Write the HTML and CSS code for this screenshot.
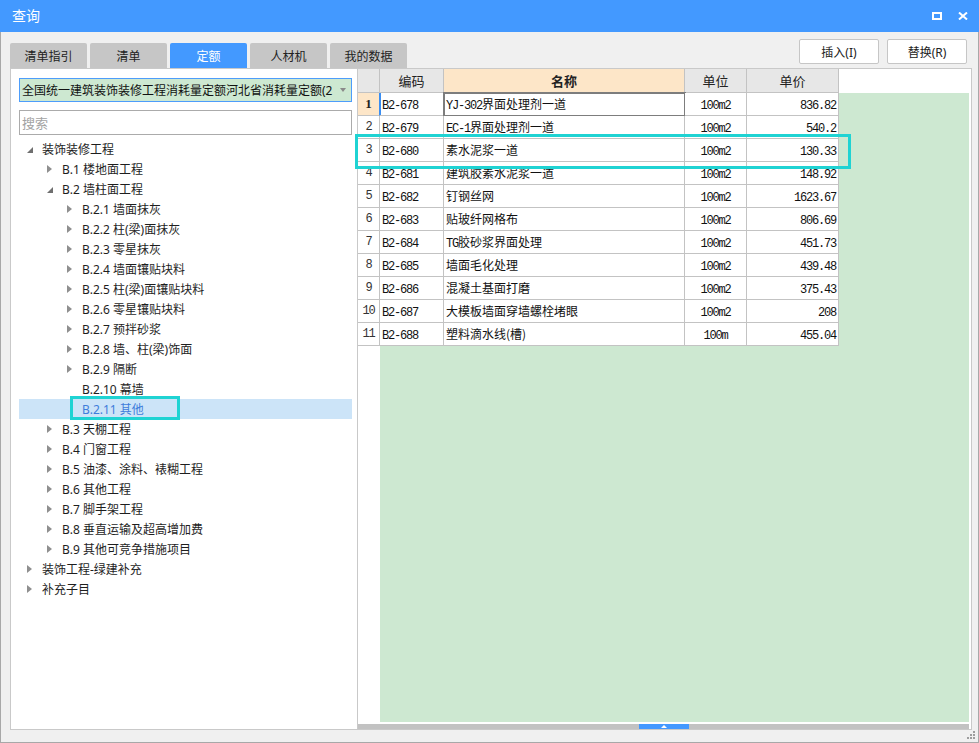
FILE: index.html
```html
<!DOCTYPE html>
<html lang="zh-CN">
<head>
<meta charset="utf-8">
<title>查询</title>
<link rel="stylesheet" href="styles.css">
</head>
<body>
<div class="window">
  <div class="titlebar">
    <span class="title">查询</span>
    <div class="win-ctrls">
      <svg class="ic-max" width="10" height="8" viewBox="0 0 10 8"><rect x="1" y="1" width="8" height="6" fill="none" stroke="#fff" stroke-width="2"/></svg>
      <svg class="ic-close" width="10" height="8" viewBox="0 0 10 8"><path d="M1 0.5 L9 7.5 M9 0.5 L1 7.5" stroke="#fff" stroke-width="2"/></svg>
    </div>
  </div>
  <div class="win-body">
    <div class="toolbar">
      <div class="tabs">
        <div class="tab">清单指引</div>
        <div class="tab">清单</div>
        <div class="tab active">定额</div>
        <div class="tab">人材机</div>
        <div class="tab">我的数据</div>
      </div>
      <div class="actions">
        <div class="btn">插入(I)</div>
        <div class="btn">替换(R)</div>
      </div>
    </div>
    <div class="panels">
      <div class="left">
        <div class="dropdown"><span class="dd-text">全国统一建筑装饰装修工程消耗量定额河北省消耗量定额(2</span><span class="caret"></span></div>
        <input class="search" type="text" placeholder="搜索">
        <div class="tree">
          <div class="node"><span class="tw exp"></span>装饰装修工程</div>
          <div class="node lv1"><span class="tw col"></span>B.1 楼地面工程</div>
          <div class="node lv1"><span class="tw exp"></span>B.2 墙柱面工程</div>
          <div class="node lv2"><span class="tw col"></span>B.2.1 墙面抹灰</div>
          <div class="node lv2"><span class="tw col"></span>B.2.2 柱(梁)面抹灰</div>
          <div class="node lv2"><span class="tw col"></span>B.2.3 零星抹灰</div>
          <div class="node lv2"><span class="tw col"></span>B.2.4 墙面镶贴块料</div>
          <div class="node lv2"><span class="tw col"></span>B.2.5 柱(梁)面镶贴块料</div>
          <div class="node lv2"><span class="tw col"></span>B.2.6 零星镶贴块料</div>
          <div class="node lv2"><span class="tw col"></span>B.2.7 预拌砂浆</div>
          <div class="node lv2"><span class="tw col"></span>B.2.8 墙、柱(梁)饰面</div>
          <div class="node lv2"><span class="tw col"></span>B.2.9 隔断</div>
          <div class="node lv2"><span class="tw"></span>B.2.10 幕墙</div>
          <div class="node lv2 sel"><span class="tw"></span>B.2.11 其他</div>
          <div class="node lv1"><span class="tw col"></span>B.3 天棚工程</div>
          <div class="node lv1"><span class="tw col"></span>B.4 门窗工程</div>
          <div class="node lv1"><span class="tw col"></span>B.5 油漆、涂料、裱糊工程</div>
          <div class="node lv1"><span class="tw col"></span>B.6 其他工程</div>
          <div class="node lv1"><span class="tw col"></span>B.7 脚手架工程</div>
          <div class="node lv1"><span class="tw col"></span>B.8 垂直运输及超高增加费</div>
          <div class="node lv1"><span class="tw col"></span>B.9 其他可竞争措施项目</div>
          <div class="node"><span class="tw col"></span>装饰工程-绿建补充</div>
          <div class="node"><span class="tw col"></span>补充子目</div>
        </div>
      </div>
      <div class="right">
        <div class="grid-head">
          <div class="hc"></div>
          <div class="hc">编码</div>
          <div class="hc sel">名称</div>
          <div class="hc">单位</div>
          <div class="hc">单价</div>
        </div>
        <div class="grid-area">
          <div class="grid-rows">
            <div class="c num cur">1</div><div class="c code cur"><span class="m">B2-678</span></div><div class="c name cur"><span class="m">YJ-302</span>界面处理剂一道</div><div class="c unit"><span class="m">100m2</span></div><div class="c price"><span class="m">836.82</span></div>
            <div class="c num">2</div><div class="c code"><span class="m">B2-679</span></div><div class="c name"><span class="m">EC-1</span>界面处理剂一道</div><div class="c unit"><span class="m">100m2</span></div><div class="c price"><span class="m">540.2</span></div>
            <div class="c num">3</div><div class="c code"><span class="m">B2-680</span></div><div class="c name">素水泥浆一道</div><div class="c unit"><span class="m">100m2</span></div><div class="c price"><span class="m">130.33</span></div>
            <div class="c num">4</div><div class="c code"><span class="m">B2-681</span></div><div class="c name">建筑胶素水泥浆一道</div><div class="c unit"><span class="m">100m2</span></div><div class="c price"><span class="m">148.92</span></div>
            <div class="c num">5</div><div class="c code"><span class="m">B2-682</span></div><div class="c name">钉钢丝网</div><div class="c unit"><span class="m">100m2</span></div><div class="c price"><span class="m">1623.67</span></div>
            <div class="c num">6</div><div class="c code"><span class="m">B2-683</span></div><div class="c name">贴玻纤网格布</div><div class="c unit"><span class="m">100m2</span></div><div class="c price"><span class="m">806.69</span></div>
            <div class="c num">7</div><div class="c code"><span class="m">B2-684</span></div><div class="c name"><span class="m">TG</span>胶砂浆界面处理</div><div class="c unit"><span class="m">100m2</span></div><div class="c price"><span class="m">451.73</span></div>
            <div class="c num">8</div><div class="c code"><span class="m">B2-685</span></div><div class="c name">墙面毛化处理</div><div class="c unit"><span class="m">100m2</span></div><div class="c price"><span class="m">439.48</span></div>
            <div class="c num">9</div><div class="c code"><span class="m">B2-686</span></div><div class="c name">混凝土基面打磨</div><div class="c unit"><span class="m">100m2</span></div><div class="c price"><span class="m">375.43</span></div>
            <div class="c num">10</div><div class="c code"><span class="m">B2-687</span></div><div class="c name">大模板墙面穿墙螺栓堵眼</div><div class="c unit"><span class="m">100m2</span></div><div class="c price"><span class="m">208</span></div>
            <div class="c num">11</div><div class="c code"><span class="m">B2-688</span></div><div class="c name">塑料滴水线(槽)</div><div class="c unit"><span class="m">100m</span></div><div class="c price"><span class="m">455.04</span></div>
          </div>
        </div>
        <div class="hscroll"><div class="thumb"><span class="thumb-arrow"></span></div></div>
      </div>
    </div>
  </div>
  <div class="mark mark-tree"></div>
  <div class="mark mark-row"></div>
  <svg class="grip" width="8" height="8" viewBox="0 0 8 8"><rect x="6" y="0" width="2" height="2"/><rect x="3" y="3" width="2" height="2"/><rect x="6" y="3" width="2" height="2"/><rect x="0" y="6" width="2" height="2"/><rect x="3" y="6" width="2" height="2"/><rect x="6" y="6" width="2" height="2"/></svg>
</div>
</body>
</html>
```

FILE: styles.css
```css
html, body {
  margin: 0;
  padding: 0;
  width: 979px;
  height: 743px;
  overflow: hidden;
  background: #f0f0f0;
}

.window {
  position: relative;
  width: 979px;
  height: 743px;
  display: flex;
  flex-direction: column;
  font-family: "Noto Sans", "Noto Sans CJK SC", sans-serif;
  color: #1e1e1e;
}

.titlebar {
  height: 32px;
  flex: none;
  background: #4399ff;
  color: #fff;
  display: flex;
  align-items: center;
  padding: 0 11px 0 12px;
}

.title {
  font-size: 14px;
  line-height: 1;
}

.win-ctrls {
  margin-left: auto;
  display: flex;
  align-items: center;
  gap: 16px;
}

.win-ctrls svg {
  display: block;
}

.win-body {
  flex: 1;
  min-height: 0;
  border: 1px solid #a8a8a8;
  border-top: none;
  background: #f0f0f0;
  padding: 7px 6px 12px 9px;
  display: flex;
  flex-direction: column;
}

.toolbar {
  height: 29px;
  flex: none;
  display: flex;
  align-items: flex-end;
}

.tabs {
  display: flex;
  gap: 3px;
}

.tab {
  width: 77px;
  height: 25px;
  background: #c6c6c6;
  border-radius: 2px 2px 0 0;
  display: flex;
  align-items: center;
  justify-content: center;
  font-size: 12px;
  color: #222;
}

.tab.active {
  background: #4399ff;
  color: #fff;
}

.actions {
  margin-left: auto;
  margin-right: 5px;
  align-self: flex-start;
  display: flex;
  gap: 8px;
}

.btn {
  width: 80px;
  height: 25px;
  box-sizing: border-box;
  background: #fff;
  border: 1px solid #c6c6c6;
  border-radius: 2px;
  display: flex;
  align-items: center;
  justify-content: center;
  font-size: 12px;
  color: #222;
}

.panels {
  flex: 1;
  min-height: 0;
  display: flex;
}

.left {
  width: 348px;
  flex: none;
  box-sizing: border-box;
  border: 1px solid #c9c9c9;
  background: #fff;
  padding: 9px 5px 0 8px;
}

.dropdown {
  height: 24px;
  box-sizing: border-box;
  border: 1px solid #4d9dfb;
  background: #cde8d1;
  display: flex;
  align-items: center;
  padding-left: 2px;
  font-size: 12px;
  color: #111;
}

.dd-text {
  flex: 1;
  white-space: nowrap;
}

.caret {
  width: 17px;
  flex: none;
  display: flex;
  justify-content: center;
}

.caret::before {
  content: "";
  border-top: 4px solid #8a8a8a;
  border-left: 3px solid transparent;
  border-right: 3px solid transparent;
}

.search {
  display: block;
  margin: 8px 0 0;
  width: 100%;
  height: 25px;
  box-sizing: border-box;
  border: 1px solid #ababab;
  padding: 0 2px;
  font-family: "Noto Sans CJK SC", sans-serif;
  font-size: 13px;
  outline: none;
  background: #fff;
}

.search::placeholder {
  color: #a3a3a3;
}

.tree {
  margin-top: 4px;
}

.node {
  height: 20px;
  display: flex;
  align-items: center;
  font-size: 12px;
  color: #1e1e1e;
  white-space: nowrap;
}

.node.lv1 {
  padding-left: 20px;
}

.node.lv2 {
  padding-left: 40px;
}

.node.sel {
  background: #cce4f8;
  color: #3f7ddb;
}

.tw {
  width: 23px;
  height: 20px;
  flex: none;
  position: relative;
}

.tw.col::before {
  content: "";
  position: absolute;
  left: 8px;
  top: 6px;
  border-left: 5px solid #8f8f8f;
  border-top: 4px solid transparent;
  border-bottom: 4px solid transparent;
}

.tw.exp::before {
  content: "";
  position: absolute;
  left: 8px;
  top: 8px;
  border-style: solid;
  border-width: 0 0 6px 6px;
  border-color: transparent transparent #6f6f6f transparent;
}

.right {
  width: 614px;
  flex: none;
  box-sizing: border-box;
  border: 1px solid #c9c9c9;
  border-left: none;
  background: #fff;
  display: flex;
  flex-direction: column;
}

.grid-head {
  height: 24px;
  flex: none;
  display: grid;
  grid-template-columns: 22px 64px 241px 62px 92px;
}

.hc {
  box-sizing: border-box;
  border-right: 1px solid #c3c3c3;
  border-bottom: 1px solid #c3c3c3;
  background: #e7e7e7;
  display: flex;
  align-items: center;
  justify-content: center;
  font-family: "Noto Sans CJK SC", sans-serif;
  font-size: 13px;
  color: #222;
}

.hc.sel {
  background: #fde6c8;
  font-weight: bold;
}

.grid-area {
  flex: 1;
  min-height: 0;
  margin-right: 2px;
  background: linear-gradient(to right, #fff 22px, #cde8d1 22px);
}

.grid-rows {
  display: grid;
  grid-template-columns: 22px 64px 241px 62px 92px;
  grid-auto-rows: 23px;
  width: 481px;
}

.c {
  box-sizing: border-box;
  border-right: 1px solid #c3c3c3;
  border-bottom: 1px solid #c3c3c3;
  background: #fff;
  display: block;
  line-height: 22px;
  overflow: hidden;
  white-space: nowrap;
  font-family: "Noto Sans CJK SC", sans-serif;
  font-size: 12px;
  color: #111;
}

.m {
  font-family: "Liberation Mono", monospace;
  font-size: 12px;
  letter-spacing: -1.2px;
}

.c.num {
  text-align: center;
  font-family: "Liberation Mono", monospace;
  font-size: 12px;
  letter-spacing: -1.2px;
  color: #333;
}

.c.num.cur {
  background: #fde6c8;
  font-weight: bold;
  font-family: "Liberation Serif", serif;
  font-size: 13px;
  letter-spacing: 0;
  border-right-color: #3a8ef2;
  color: #222;
}

.c.code {
  padding-left: 2px;
}

.c.code.cur {
  box-shadow: inset 1px 0 0 #3a8ef2;
}

.c.name {
  padding-left: 2px;
}

.c.name.cur {
  outline: 2px solid #7d7d7d;
  outline-offset: -1px;
}

.c.unit {
  text-align: center;
}

.c.price {
  text-align: right;
  padding-right: 2px;
}

.hscroll {
  height: 5px;
  flex: none;
  margin: 2px 2px 0 0;
  background: #c2c2c2;
  display: flex;
  justify-content: center;
}

.thumb {
  width: 50px;
  height: 5px;
  background: #4399ff;
  display: flex;
  justify-content: center;
  align-items: center;
}

.thumb-arrow {
  border-bottom: 3px solid #fff;
  border-left: 3px solid transparent;
  border-right: 3px solid transparent;
}

.mark {
  position: absolute;
  box-sizing: border-box;
  border: 3px solid #1fd3d3;
  pointer-events: none;
}

.mark-tree {
  left: 70px;
  top: 396px;
  width: 110px;
  height: 24px;
}

.mark-row {
  left: 355px;
  top: 134px;
  width: 496px;
  height: 35px;
}

.grip {
  position: absolute;
  right: 4px;
  bottom: 4px;
  fill: #9d9d9d;
}
```
